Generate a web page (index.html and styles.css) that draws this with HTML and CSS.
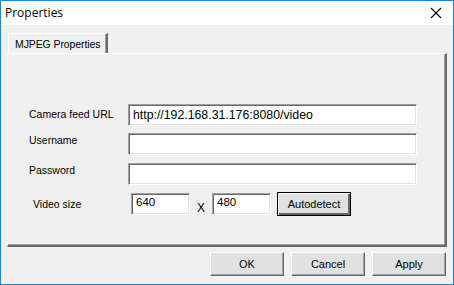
FILE: index.html
```html
<!DOCTYPE html>
<html lang="en">
<head>
    <meta charset="UTF-8">
    <title>Properties</title>
    <link rel="stylesheet" href="styles.css">
</head>
<body>

<div class="window">
    <div class="titlebar">
        <span class="title">Properties</span>
        <svg class="close" width="12" height="12" viewBox="0 0 12 12">
            <path d="M1 1 L11 11 M11 1 L1 11" stroke="#000" stroke-width="1.1" fill="none"/>
        </svg>
    </div>

    <div class="content">
        <div class="tab">MJPEG Properties</div>

        <div class="panel">
            <div class="row first">
                <label for="url">Camera feed URL</label>
                <input type="text" id="url" class="field wide" value="http://192.168.31.176:8080/video">
            </div>
            <div class="row">
                <label for="user">Username</label>
                <input type="text" id="user" class="field wide">
            </div>
            <div class="row">
                <label for="pass">Password</label>
                <input type="text" id="pass" class="field wide">
            </div>
            <div class="row video">
                <label for="vw">Video size</label>
                <input type="text" id="vw" class="field small" value="640">
                <span class="times">X</span>
                <input type="text" id="vh" class="field small" value="480">
                <button class="btn detect">Autodetect</button>
            </div>
        </div>

        <div class="actions">
            <button class="btn">OK</button>
            <button class="btn">Cancel</button>
            <button class="btn">Apply</button>
        </div>
    </div>
</div>

</body>
</html>
```

FILE: styles.css
```css
body {
    margin: 0;
    font-family: "Liberation Sans", Arial, sans-serif;
    font-size: 10.5px;
    color: #000;
}
.window {
    width: 454px;
    height: 285px;
    box-sizing: border-box;
    border: 1px solid #1883d7;
    background-color: #f0f0f0;
    display: flex;
    flex-direction: column;
}
.titlebar {
    height: 24px;
    background-color: #fff;
    display: flex;
    align-items: center;
    justify-content: space-between;
    padding: 0 11px 0 4px;
}
.title {
    font-family: "Open Sans", "Noto Sans", sans-serif;
    font-size: 12px;
    margin-top: -1px;
}
.content {
    padding: 8px 6px 0 6px;
}
.tab {
    margin-left: 1px;
    width: 100px;
    height: 20px;
    box-sizing: border-box;
    white-space: nowrap;
    letter-spacing: -0.1px;
    border-top: 1px solid #fff;
    border-left: 1px solid #fff;
    border-right: 2px solid #696969;
    padding: 4px 0 0 6px;
    box-shadow: inset -1px 0 0 #a0a0a0;
}
.panel {
    height: 194px;
    box-sizing: border-box;
    border-top: 1px solid #fff;
    border-left: 1px solid #fff;
    border-right: 2px solid #696969;
    border-bottom: 2px solid #696969;
    box-shadow: inset -1px -1px 0 #a0a0a0;
    padding: 50px 0 0 21px;
}
.row {
    display: flex;
    align-items: center;
    height: 22px;
    margin-bottom: 8px;
}
.row.first {
    margin-bottom: 7px;
}
.row label {
    width: 99px;
    margin-top: -8px;
}
.row.first label {
    margin-top: -2px;
}
.video {
    margin-top: 2px;
}
.video label {
    margin-top: 0;
    padding-left: 4px;
    width: 97px;
}
.field {
    height: 22px;
    box-sizing: border-box;
    border: none;
    margin: 0;
    background-color: #fff;
    font-family: "Liberation Sans", Arial, sans-serif;
    font-size: 12.3px;
    padding: 0 0 0 4px;
    border-top: 1px solid #a0a0a0;
    border-left: 1px solid #a0a0a0;
    border-right: 1px solid #fff;
    border-bottom: 1px solid #fff;
    box-shadow: inset 1px 1px 0 #696969, inset -1px -1px 0 #e3e3e3;
}
.wide {
    width: 289px;
}
.small {
    width: 59px;
    font-size: 11.5px;
    padding-bottom: 4px;
}
.video .small:first-of-type {
    margin-left: 1px;
}
.times {
    width: 22px;
    text-align: center;
    margin-top: 7px;
    font-size: 12px;
}
.btn {
    width: 74px;
    height: 24px;
    box-sizing: border-box;
    background-color: #e1e1e1;
    font-family: "Liberation Sans", Arial, sans-serif;
    font-size: 11px;
    padding: 0;
    border-top: 1px solid #fff;
    border-left: 1px solid #fff;
    border-right: 1px solid #696969;
    border-bottom: 1px solid #696969;
    box-shadow: inset -1px -1px 0 #a0a0a0;
}
.detect {
    margin-left: 6px;
    border: 1px solid #000;
    box-shadow: inset 1px 1px 0 #fff, inset -2px -2px 0 #696969;
    width: 74px;
}
.actions {
    display: flex;
    justify-content: flex-end;
    gap: 7px;
    margin-top: 5px;
    padding-right: 1px;
}
```
